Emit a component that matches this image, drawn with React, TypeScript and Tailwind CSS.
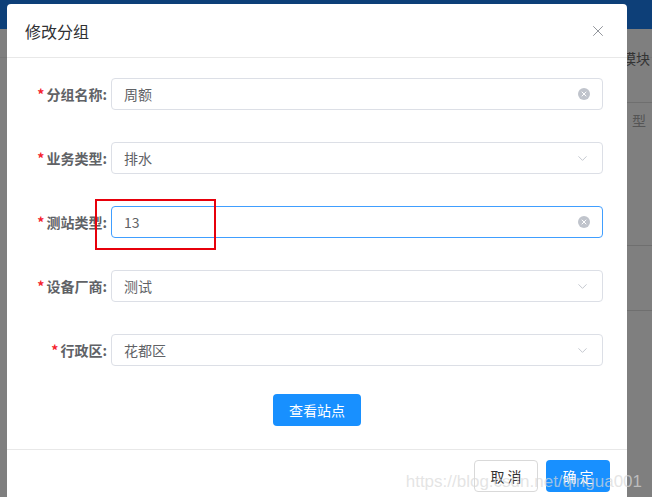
import React from 'react';
import { ChevronDown, X } from 'lucide-react';

const fields = [
  { label: '分组名称', value: '周额', kind: 'clear' },
  { label: '业务类型', value: '排水', kind: 'select' },
  { label: '测站类型', value: '13', kind: 'clear', focus: true },
  { label: '设备厂商', value: '测试', kind: 'select' },
  { label: '行政区', value: '花都区', kind: 'select' },
];

const ClearIcon = () => (
  <span className="flex h-[12px] w-[12px] items-center justify-center rounded-full bg-[#c0c4cc]">
    <X size={8} strokeWidth={3} className="text-white" />
  </span>
);

export default function App() {
  return (
    <div
      className="relative h-[497px] w-[652px] overflow-hidden bg-[#7f7f7f]"
      style={{ fontFamily: '"Microsoft YaHei", "Noto Sans CJK SC", sans-serif' }}
    >
      {/* dimmed page behind */}
      <div className="h-[29px] bg-[#0d3f78]" />
      <div className="mt-[28px] h-px bg-[#777]" />
      <div className="absolute right-[2px] top-[48px] text-[14px] text-[#333]">模块</div>
      <div className="absolute right-[6px] top-[110px] text-[14px] text-[#555]">型</div>
      <div className="absolute right-0 top-[102px] h-px w-[30px] bg-[#6f6f6f]" />
      <div className="absolute right-0 top-[245px] h-px w-[30px] bg-[#6f6f6f]" />
      <div className="absolute right-0 top-[310px] h-px w-[30px] bg-[#6f6f6f]" />

      {/* dialog */}
      <div className="absolute left-[7px] top-[4px] w-[620px] rounded-t-[4px] bg-white">
        <div className="flex h-[54px] items-center justify-between border-b border-[#e8e8e8] pl-[18px] pr-[20px]">
          <span className="text-[16px] text-[#303133]">修改分组</span>
          <X size={18} strokeWidth={1.3} className="text-[#909399]" />
        </div>
        <div className="flex flex-col gap-[32px] pr-[24px] pt-[20px]">
          {fields.map((f) => (
            <div key={f.label} className="flex items-center">
              <label className="w-[104px] pr-[4px] text-right text-[14px] font-semibold text-[#606266]">
                <span className="mr-[2px] text-[#f5222d]">*</span>
                {f.label}:
              </label>
              <div
                className={`flex h-[32px] flex-1 items-center justify-between rounded-[4px] border px-[12px] text-[14px] text-[#606266] ${
                  f.focus ? 'border-[#409eff]' : 'border-[#dcdfe6]'
                }`}
              >
                <span>{f.value}</span>
                {f.kind === 'clear' ? (
                  <ClearIcon />
                ) : (
                  <ChevronDown size={15} strokeWidth={1.5} className="text-[#c0c4cc]" />
                )}
              </div>
            </div>
          ))}
        </div>
        <div className="flex justify-center pb-[23px] pt-[28px]">
          <button className="h-[32px] w-[88px] rounded-[4px] bg-[#1890ff] text-[14px] text-white">查看站点</button>
        </div>
        <div className="flex h-[60px] justify-end gap-[8px] border-t border-[#e8e8e8] pr-[17px] pt-[10px]">
          <button className="h-[32px] w-[64px] rounded-[4px] border border-[#d9d9d9] bg-white text-[14px] text-[#333]">取 消</button>
          <button className="h-[32px] w-[64px] rounded-[4px] bg-[#1890ff] text-[14px] text-white">确 定</button>
        </div>
      </div>

      {/* annotation box */}
      <div className="absolute left-[95px] top-[199px] h-[51px] w-[121px] border-2 border-solid border-red-600" />
      {/* watermark */}
      <div
        className="pointer-events-none absolute right-[10px] top-[469px] text-[17px] text-[#d8d8d8]/70"
        style={{ fontFamily: '"Liberation Sans", sans-serif' }}
      >
        https://blog.csdn.net/qingua001
      </div>
    </div>
  );
}
